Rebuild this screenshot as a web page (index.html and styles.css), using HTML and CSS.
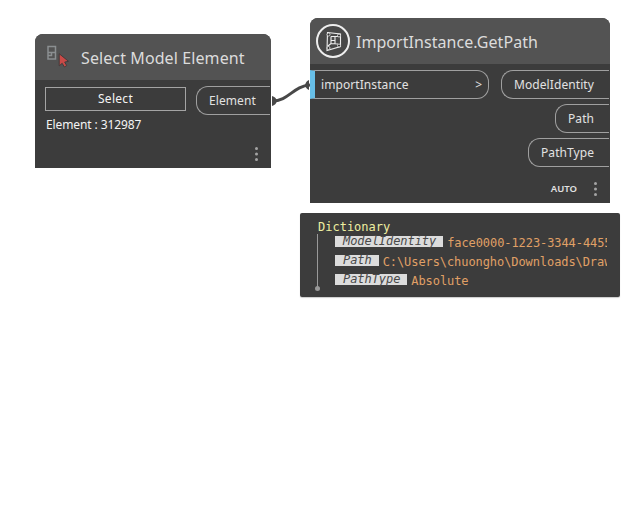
FILE: index.html
```html
<!DOCTYPE html>
<html lang="en">
<head>
<meta charset="utf-8">
<title>Node graph</title>
<link rel="stylesheet" href="styles.css">
</head>
<body>
<main class="canvas">
  <svg class="wire" width="644" height="508" viewBox="0 0 644 508">
    <path d="M272 101C289 101 293 86 310 85" fill="none" stroke="#484848" stroke-width="3"/>
    <path d="M272 96q4 1 5 5q-1 4-5 5zM309 80q-3 1-4 5q1 4 4 5z" fill="#484848"/>
  </svg>

  <section class="node node-select">
    <header class="node-header">
      <svg class="select-icon" width="24" height="25" viewBox="0 0 24 25">
        <path d="M2 1.5h7.5v12.5H2zM2 7.5h7.5M5.5 7.5v3H2" fill="none" stroke="#8b8f91" stroke-width="1.5"/>
        <path d="M13.2 8.7v12.2l3-2.6 2.1 3.7 2.4-1.4-2-3.5 3.8-.8z" fill="#c94a47" stroke="#423c3c" stroke-width="1"/>
      </svg>
      <h1 class="title title-select">Select Model Element</h1>
    </header>
    <div class="node-body">
      <div class="picker">
        <button class="select-button">Select</button>
        <span class="selection">Element : 312987</span>
      </div>
      <div class="port port-out port-element">Element</div>
    </div>
    <footer class="node-footer">
      <svg class="dots" width="3" height="14" viewBox="0 0 3 14"><circle cx="1.5" cy="1.5" r="1.5"/><circle cx="1.5" cy="7" r="1.5"/><circle cx="1.5" cy="12.5" r="1.5"/></svg>
    </footer>
  </section>

  <section class="node node-path">
    <header class="node-header">
      <svg class="badge" width="34" height="34" viewBox="0 0 34 34">
        <circle cx="17" cy="17" r="16" fill="#484848" stroke="#eee" stroke-width="2"/>
        <g fill="none" stroke="#eee" stroke-width="1.1">
          <path d="M11.5 8.5L24.5 10v12.5L11 26.500zM15 12.500H22M15 12.500V19.500M15 19.500L22 20M19 12v8M15 16.500h4M15 19.500L12 22"/>
        </g>
        <g fill="#333" stroke="#eee" stroke-width=".8">
          <circle cx="12.500" cy="10.500" r="1.500"/><circle cx="23" cy="11.500" r="1.500"/>
          <circle cx="23" cy="21.500" r="1.500"/><circle cx="12.500" cy="24" r="1.500"/>
        </g>
      </svg>
      <h1 class="title title-path">ImportInstance.GetPath</h1>
    </header>
    <div class="node-body">
      <div class="port port-in"><span class="import-label">importInstance</span><span>&gt;</span></div>
      <div class="outputs">
        <div class="port port-out port-model">ModelIdentity</div>
        <div class="port port-out port-file">Path</div>
        <div class="port port-out port-type">PathType</div>
      </div>
    </div>
    <footer class="node-footer">
      <span class="lacing">AUTO</span>
      <svg class="dots" width="3" height="14" viewBox="0 0 3 14"><circle cx="1.5" cy="1.5" r="1.5"/><circle cx="1.5" cy="7" r="1.5"/><circle cx="1.5" cy="12.5" r="1.5"/></svg>
    </footer>
  </section>

  <section class="preview">
    <div class="kind">Dictionary</div>
    <div class="entries">
      <div class="entry"><em class="key">ModelIdentity</em><span class="value">face0000-1223-3344-4455</span></div>
      <div class="entry"><em class="key">Path</em><span class="value">C:\Users\chuongho\Downloads\Draw</span></div>
      <div class="entry"><em class="key">PathType</em><span class="value">Absolute</span></div>
    </div>
  </section>
</main>
</body>
</html>
```
FILE: styles.css
```css
* { box-sizing: border-box; }
body { margin: 0; background: #fff; }
.canvas {
  position: relative;
  width: 644px;
  height: 508px;
  overflow: hidden;
  font: 12px/16px "Noto Sans", sans-serif;
  color: #e2e2e2;
}
.wire { position: absolute; left: 0; top: 0; }

.node {
  position: absolute;
  display: flex;
  flex-direction: column;
  background: #3c3c3c;
  border-radius: 8px 8px 0 0;
}
.node-select { left: 35px; top: 34px; width: 236px; height: 134px; }
.node-path { left: 310px; top: 18px; width: 300px; height: 185px; }
.node-header {
  display: flex;
  align-items: center;
  height: 46px;
  flex: none;
  background: #535353;
  border-radius: 8px 8px 0 0;
}
.select-icon { margin: 0 11px 0 11px; }
.badge { margin: 0 6px; }
.title {
  margin: 2px 0 0;
  font-size: 16px;
  line-height: 22px;
  font-weight: 400;
  color: #dcdcdc;
  white-space: nowrap;
}
.title-select { letter-spacing: 0.1px; }
.title-path { letter-spacing: 0.05px; }
.node-body { display: flex; justify-content: space-between; padding: 6px 1px 0 0; }
.node-select .node-body { padding-left: 10px; }

.picker { display: flex; flex-direction: column; width: 141px; padding-top: 1px; }
.select-button {
  height: 24px;
  padding: 0;
  border: 1px solid #a4a4a4;
  background: #3c3c3c;
  color: #f4f4f4;
  font: inherit;
  letter-spacing: 0.3px;
}
.selection { margin: 6px 0 0 1px; color: #f4f4f4; white-space: nowrap; letter-spacing: -0.1px; }

.port { height: 29px; border: 1px solid #a0a0a0; line-height: 27px; white-space: nowrap; }
.port-out { border-right: 0; border-radius: 12px 0 0 12px; padding-left: 12px; letter-spacing: 0.08px; }
.port-element { width: 74px; }
.port-model { width: 108px; }
.port-file { width: 54px; }
.port-type { width: 81px; }
.port-in {
  display: flex;
  justify-content: space-between;
  width: 179px;
  padding: 0 6px;
  border-left: 5px solid #67bfe8;
  border-radius: 0 12px 12px 0;
}
.import-label { letter-spacing: 0.08px; }
.outputs { display: flex; flex-direction: column; align-items: flex-end; gap: 5px; }

.node-footer {
  display: flex;
  align-items: center;
  justify-content: flex-end;
  gap: 17px;
  height: 28px;
  margin-top: auto;
  padding-right: 13px;
}
.lacing { font-size: 9.5px; font-weight: 600; }
.dots { fill: #a4a4a4; }

.preview {
  position: absolute;
  left: 300px;
  top: 213px;
  width: 320px;
  height: 84px;
  padding: 6px 13px 0 18px;
  background: #3c3c3c;
  border-radius: 2px;
  box-shadow: 0 1px 1px #ccc;
  font: 12px/16px "DejaVu Sans Mono", monospace;
}
.kind { color: #eeeea0; }
.entries {
  position: relative;
  display: flex;
  flex-direction: column;
  gap: 3px;
  margin-left: -1px;
  padding-left: 18px;
}
.entries::before {
  content: "";
  position: absolute;
  left: 0;
  top: -1px;
  width: 1px;
  height: 54px;
  background: #999;
}
.entries::after {
  content: "";
  position: absolute;
  left: -2px;
  top: 51px;
  width: 5px;
  height: 5px;
  border-radius: 50%;
  background: #999;
}
.entry {
  display: flex;
  gap: 4px;
  height: 16px;
  overflow: hidden;
  white-space: nowrap;
  color: #e0a066;
}
.value { letter-spacing: -0.08px; }
.key {
  height: 11px;
  margin-top: 1px;
  padding: 0 7px 0 8px;
  background: #dcdcdc;
  color: #484848;
  line-height: 11px;
  letter-spacing: -0.06px;
}
```
